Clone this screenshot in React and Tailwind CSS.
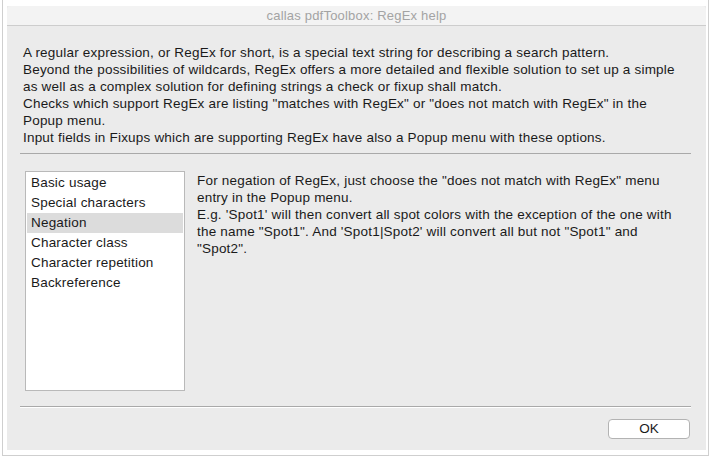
export default function App() {
  const font = { fontFamily: '"Liberation Sans", Arial, sans-serif' };
  const items = [
    "Basic usage",
    "Special characters",
    "Negation",
    "Character class",
    "Character repetition",
    "Backreference",
  ];
  return (
    <div className="w-[712px] h-[458px] bg-white" style={font}>
      <div className="ml-[2px] w-[707px] h-[456px] border-l border-r border-b border-[#cfcfcf] bg-white pl-[4px] pt-[6px] flex flex-col">
        <div className="w-[699px] h-[444px] flex flex-col bg-[#ebebeb]">
          {/* title bar */}
          <div className="h-[20px] shrink-0 bg-[#f3f3f3] border-b border-[#cdcdcd] flex items-center justify-center text-[13px] tracking-[0.2px] text-[#a3a3a3] rounded-t-[4px]">
            callas pdfToolbox: RegEx help
          </div>
          {/* intro */}
          <div className="pt-[18px] pl-[16px] text-[13.5px] tracking-[0.2px] leading-[17px] text-[#1a1a1a]">
            <div>A regular expression, or RegEx for short, is a special text string for describing a search pattern.</div>
            <div>Beyond the possibilities of wildcards, RegEx offers a more detailed and flexible solution to set up a simple</div>
            <div>as well as a complex solution for defining strings a check or fixup shall match.</div>
            <div>Checks which support RegEx are listing "matches with RegEx" or "does not match with RegEx" in the</div>
            <div>Popup menu.</div>
            <div>Input fields in Fixups which are supporting RegEx have also a Popup menu with these options.</div>
          </div>
          <div className="mt-[7px] ml-[13px] mr-[15px] h-px bg-[#a9a9a9]" />
          {/* middle */}
          <div className="mt-[17px] ml-[18px] flex gap-[12px]">
            <div className="w-[160px] h-[220px] bg-white border border-[#b9b9b9] pt-[1px] px-[1px]">
              {items.map((it) => (
                <div
                  key={it}
                  className={
                    "h-[20px] pl-[4px] flex items-center text-[13.5px] tracking-[0.2px] text-[#1a1a1a] " +
                    (it === "Negation" ? "bg-[#dcdcdc]" : "")
                  }
                >
                  {it}
                </div>
              ))}
            </div>
            <div className="text-[13.5px] tracking-[0.2px] leading-[17px] text-[#1a1a1a] pt-[1px]">
              <div>For negation of RegEx, just choose the "does not match with RegEx" menu</div>
              <div>entry in the Popup menu.</div>
              <div>E.g. 'Spot1' will then convert all spot colors with the exception of the one with</div>
              <div>the name "Spot1". And 'Spot1|Spot2' will convert all but not "Spot1" and</div>
              <div>"Spot2".</div>
            </div>
          </div>
          <div className="mt-[15px] ml-[13px] mr-[15px] h-px bg-[#a9a9a9]" />
          <div className="ml-[13px] mr-[15px] h-px bg-white" />
          <div className="flex justify-end pr-[16px] mt-[11px]">
            <div className="w-[82px] h-[20px] rounded-[4px] bg-white border border-[#b3b3b3] flex items-center justify-center text-[13.5px] text-[#1a1a1a]">
              OK
            </div>
          </div>
        </div>
      </div>
    </div>
  );
}
